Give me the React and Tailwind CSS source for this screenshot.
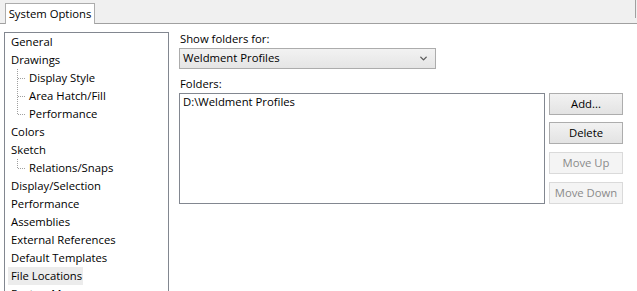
import { ChevronDown } from "lucide-react"

const treeItems = [
  { label: "General" },
  { label: "Drawings" },
  { label: "Display Style", child: "first" },
  { label: "Area Hatch/Fill", child: "mid" },
  { label: "Performance", child: "last" },
  { label: "Colors" },
  { label: "Sketch" },
  { label: "Relations/Snaps", child: "only" },
  { label: "Display/Selection" },
  { label: "Performance" },
  { label: "Assemblies" },
  { label: "External References" },
  { label: "Default Templates" },
  { label: "File Locations", selected: true },
  { label: "FeatureManager" },
]

// dotted tree connector drawn in the gutter left of a child item
function Connector({ kind }) {
  const bottom = kind === "last" || kind === "only" ? 10 : 18
  return (
    <svg width="18" height="18" className="shrink-0" shapeRendering="crispEdges">
      <line x1="9.5" y1="0" x2="9.5" y2={bottom} stroke="#a0a0a0" strokeDasharray="1 1" />
      <line x1="10" y1="9.5" x2="18" y2="9.5" stroke="#a0a0a0" strokeDasharray="1 1" />
    </svg>
  )
}

function TreeRow({ item }) {
  return (
    <div className="flex h-[18px] items-center pl-[3px]">
      {item.child && <Connector kind={item.child} />}
      <span
        className={`pl-[3px] pr-px leading-[18px] whitespace-nowrap ${item.selected ? "bg-[#ececec]" : ""}`}
      >
        {item.label}
      </span>
    </div>
  )
}

function Button({ children, disabled, className = "" }) {
  return (
    <button
      disabled={disabled}
      className={`w-[74px] h-[22px] border text-center leading-[20px] ${
        disabled
          ? "bg-[#f4f4f4] border-[#dadada] text-[#8a8a8a]"
          : "bg-gradient-to-b from-[#f2f2f2] to-[#e3e3e3] border-[#adadad] text-black"
      } ${className}`}
    >
      {children}
    </button>
  )
}

export default function App() {
  return (
    <div
      className="w-[637px] h-[291px] overflow-hidden bg-white text-[11.3px] text-black"
      style={{ fontFamily: '"Segoe UI", "Open Sans", sans-serif' }}
    >
      {/* Tab strip */}
      <div className="flex items-end h-[24px] bg-[#f0f0f0] border-b border-[#a0a0a0] pl-[5px]">
        <div className="w-[90px] h-[21px] -mb-px bg-white border border-b-0 border-[#acacac] flex items-center justify-center leading-none">
          System Options
        </div>
        <div className="ml-auto mr-[1px] self-start w-[1px] h-[18px] bg-[#a0a0a0]"></div>
      </div>

      <div className="flex">
        {/* Tree */}
        <div className="ml-[4px] mt-[8px] w-[165px] h-[270px] border border-[#828790] overflow-hidden">
          {treeItems.map((item, i) => (
            <TreeRow key={i} item={item} />
          ))}
        </div>

        {/* Right panel */}
        <div className="ml-[10px] pt-[6px]">
          <div className="h-[18px] leading-[18px] pl-px">Show folders for:</div>
          <div className="w-[257px] h-[21px] border border-[#acacac] bg-gradient-to-b from-[#f2f2f2] to-[#e5e5e5] flex items-center pl-[3px] pr-[6px]">
            <span className="flex-1">Weldment Profiles</span>
            <ChevronDown size={11} strokeWidth={3} className="text-[#5a5a5a]" />
          </div>
          <div className="mt-[6px] h-[18px] leading-[18px] pl-px">Folders:</div>
          <div className="flex gap-[4px]">
            <div className="w-[366px] h-[111px] border border-[#828790] pl-[3px] leading-[15px]">
              D:\Weldment Profiles
            </div>
            <div className="flex flex-col">
              <Button>Add...</Button>
              <Button className="mt-[7px]">Delete</Button>
              <Button disabled className="mt-[8px]">Move Up</Button>
              <Button disabled className="mt-[8px]">Move Down</Button>
            </div>
          </div>
        </div>
      </div>
    </div>
  )
}
